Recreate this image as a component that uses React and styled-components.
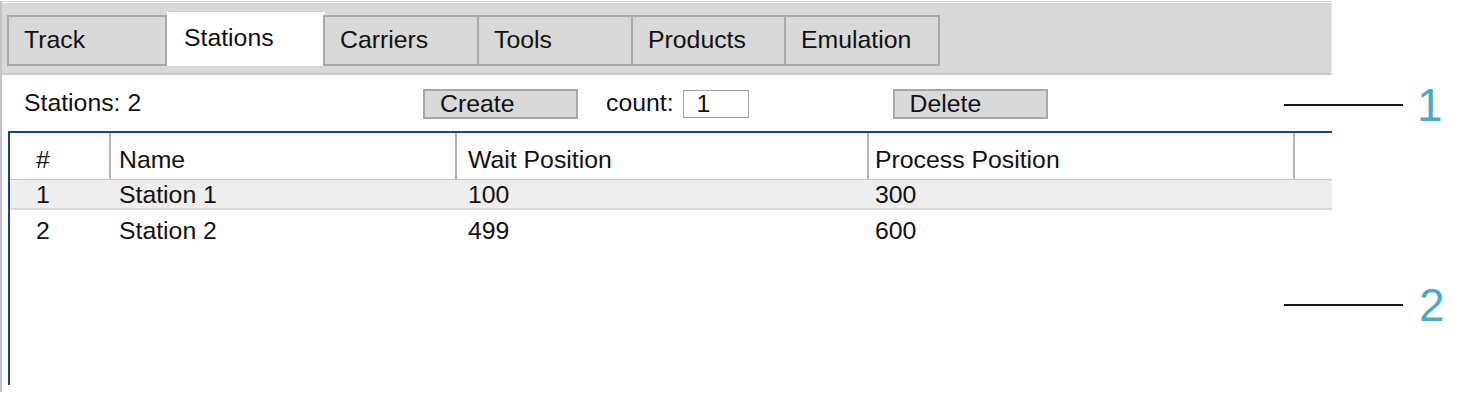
import React from 'react';
import styled, { createGlobalStyle } from 'styled-components';

const GlobalStyle = createGlobalStyle`
  html, body { margin: 0; padding: 0; background: #ffffff; }
  body { font-family: "Liberation Sans", Arial, sans-serif; color: #111111; }
  * { box-sizing: border-box; }
`;

const FS = '24.8px';

const Page = styled.div`
  position: relative;
  width: 1474px;
  height: 396px;
  padding-top: 1px;
  overflow: hidden;
`;

const Window = styled.div`
  width: 1332px;
  height: 391px;
  border-top: 1px solid #d2d2d2;
  border-left: 2px solid #c4c4c4;
  display: flex;
  flex-direction: column;
  background: #ffffff;
`;

const TabBar = styled.div`
  margin-top: 1px;
  height: 72px;
  background: #d9d9d9;
  border-bottom: 2px solid #c9c9c9;
  border-right: 1px solid #e6e6e6;
  display: flex;
  align-items: flex-end;
  padding: 0 0 7px 5px;
`;

const Tab = styled.div`
  position: relative;
  width: ${p => p.$w}px;
  height: ${p => (p.$active ? 55 : 51)}px;
  margin-left: ${p => (p.$active ? 0 : -2)}px;
  &:first-child { margin-left: 0; }
  background: ${p => (p.$active ? '#ffffff' : '#d9d9d9')};
  border: 2px solid ${p => (p.$active ? '#ffffff' : '#a9a9a9')};
  border-top: ${p => (p.$active ? '1px solid #d0d0d0' : '2px solid #a9a9a9')};
  padding: ${p => (p.$active ? 12 : 9)}px 0 0 15px;
  font-size: ${FS};
  line-height: 28px;
  color: #111111;
  white-space: nowrap;
`;

const Toolbar = styled.div`
  height: 56px;
  display: flex;
  align-items: center;
  padding-left: 22px;
  font-size: ${FS};
  line-height: 28px;
`;

const Status = styled.div`
  width: 399px;
  white-space: nowrap;
`;

const Button = styled.div`
  width: 155px;
  height: 30px;
  margin-top: 2px;
  margin-left: ${p => p.$gap || 0}px;
  background: #d9d9d9;
  border: 2px solid #a8a8a8;
  padding-left: 15px;
  font-size: ${FS};
  line-height: 26px;
  white-space: nowrap;
`;

const Label = styled.span`
  margin-left: 28px;
  white-space: nowrap;
`;

const CountInput = styled.input`
  margin-left: 9px;
  margin-top: 2px;
  width: 66px;
  height: 28px;
  border: 1px solid #a4a4a4;
  padding: 0 0 0 13px;
  font-family: "Liberation Sans", Arial, sans-serif;
  font-size: ${FS};
  line-height: 26px;
  color: #111111;
  background: #ffffff;
  outline: none;
`;

const TableArea = styled.div`
  flex: 1;
  padding: 0 0 7px 6px;
  display: flex;
`;

const TableFrame = styled.div`
  flex: 1;
  border-top: 2px solid #1b3f9f;
  border-left: 2px solid #1b3f9f;
  display: flex;
  flex-direction: column;
  font-size: ${FS};
`;

const COLS = '101px 346px 412px 426px 1fr';

const HeaderRow = styled.div`
  display: grid;
  grid-template-columns: ${COLS};
  height: 47px;
  border-bottom: 1px solid #c4c4c4;
`;

const HeaderCell = styled.div`
  padding: 13px 0 0 ${p => p.$pad}px;
  line-height: 28px;
  border-right: ${p => (p.$last ? 'none' : '2px solid #b5b5b5')};
  white-space: nowrap;
`;

const Body = styled.div`
  display: flex;
  flex-direction: column;
  gap: 6px;
`;

const Row = styled.div`
  display: grid;
  grid-template-columns: ${COLS};
  height: ${p => (p.$selected ? 30 : 28)}px;
  background: ${p => (p.$selected ? '#eeeeee' : 'transparent')};
  border-bottom: ${p => (p.$selected ? '2px solid #d9d9d9' : 'none')};
`;

const Cell = styled.div`
  padding: 1px 0 0 ${p => p.$pad}px;
  line-height: 28px;
  white-space: nowrap;
`;

const Callout = styled.div`
  position: absolute;
  left: 1284px;
  top: ${p => p.$top}px;
  display: flex;
  align-items: center;
`;

const CalloutLine = styled.div`
  width: 119px;
  height: 2px;
  background: #1a1a1a;
`;

const CalloutNum = styled.div`
  margin-left: ${p => p.$gap}px;
  font-size: 46px;
  line-height: 46px;
  color: #4aaac8;
`;

const tabs = [
  { label: 'Track', w: 160 },
  { label: 'Stations', w: 158, active: true },
  { label: 'Carriers', w: 156 },
  { label: 'Tools', w: 156 },
  { label: 'Products', w: 155 },
  { label: 'Emulation', w: 156 },
];

const columns = [
  { key: 'id', title: '#', pad: 26 },
  { key: 'name', title: 'Name', pad: 8 },
  { key: 'wait', title: 'Wait Position', pad: 11 },
  { key: 'process', title: 'Process Position', pad: 6 },
  { key: 'extra', title: '', pad: 6 },
];

const stations = [
  { id: 1, name: 'Station 1', wait: 100, process: 300, extra: '' },
  { id: 2, name: 'Station 2', wait: 499, process: 600, extra: '' },
];

export default function App() {
  return (
    <Page>
      <GlobalStyle />
      <Window>
        <TabBar>
          {tabs.map(t => (
            <Tab key={t.label} $w={t.w} $active={t.active}>
              {t.label}
            </Tab>
          ))}
        </TabBar>
        <Toolbar>
          <Status>Stations: {stations.length}</Status>
          <Button>Create</Button>
          <Label>count:</Label>
          <CountInput readOnly value="1" />
          <Button $gap={144}>Delete</Button>
        </Toolbar>
        <TableArea>
          <TableFrame>
            <HeaderRow>
              {columns.map((c, i) => (
                <HeaderCell key={c.key} $pad={c.pad} $last={i === columns.length - 1}>
                  {c.title}
                </HeaderCell>
              ))}
            </HeaderRow>
            <Body>
              {stations.map((s, r) => (
                <Row key={s.id} $selected={r === 0}>
                  {columns.map(c => (
                    <Cell key={c.key} $pad={c.pad}>
                      {s[c.key]}
                    </Cell>
                  ))}
                </Row>
              ))}
            </Body>
          </TableFrame>
        </TableArea>
      </Window>
      <Callout $top={82}>
        <CalloutLine />
        <CalloutNum $gap={14}>1</CalloutNum>
      </Callout>
      <Callout $top={282}>
        <CalloutLine />
        <CalloutNum $gap={16}>2</CalloutNum>
      </Callout>
    </Page>
  );
}
